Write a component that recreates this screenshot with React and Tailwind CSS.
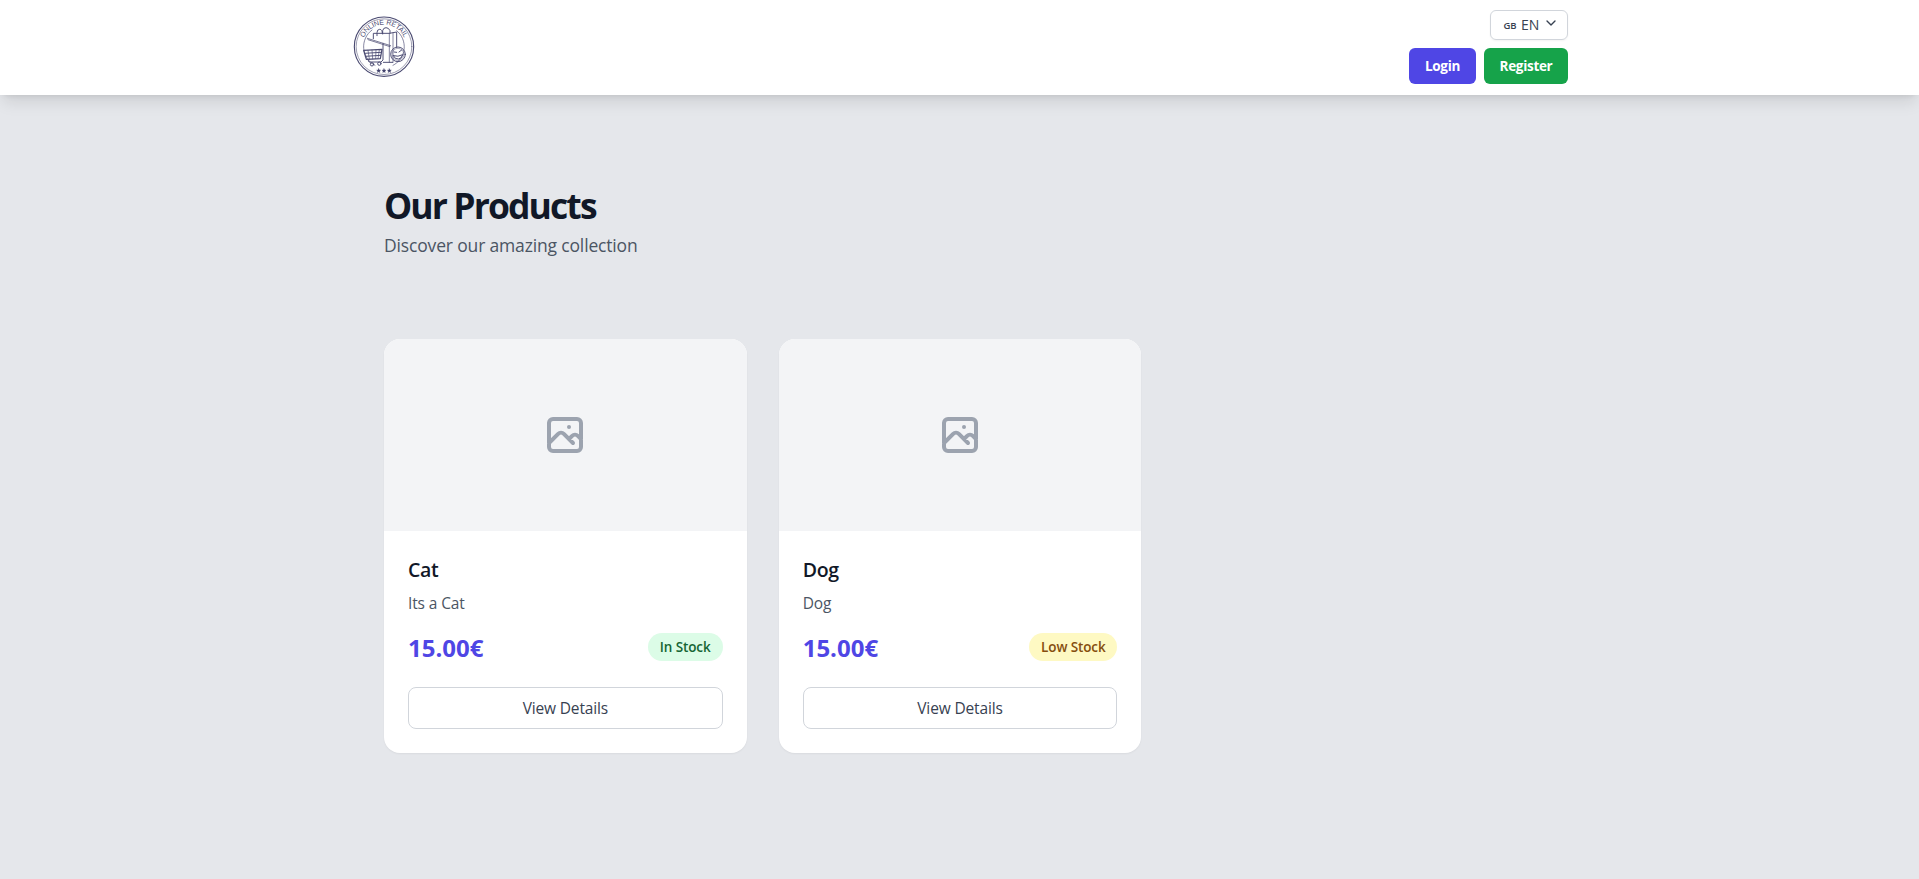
import { ChevronDown } from "lucide-react";

function Logo() {
  return (
    <svg className="size-16" viewBox="24 27 192 192" fill="none" stroke="#4b4b72" strokeWidth="2.9" strokeLinecap="round" strokeLinejoin="round">
      <defs>
        <path id="logo-arc" d="M54 122a66 66 0 0 1 132 0" />
      </defs>
      <circle cx="120" cy="122" r="89" strokeWidth="3.4" />
      <circle cx="120" cy="122" r="83.5" strokeWidth="1.6" />
      <path d="M93 178A62 62 0 0 1 84 72" strokeWidth="2" />
      <path d="M147 178A62 62 0 0 0 158 74" strokeWidth="2" />
      <text fill="#4b4b72" stroke="none" fontSize="21" textAnchor="middle" textLength="152" lengthAdjust="spacing" className="font-['Liberation_Sans']">
        <textPath href="#logo-arc" startOffset="50%">ONLINE RETAIL</textPath>
      </text>
      <path d="M88 98V82h48l22-4v46M118 169h28" />
      <path d="M136 82v87M147 81v88" strokeWidth="2" />
      <path d="M99 89V80q0-10 8-10t8 12M116 84V74q2-9 10-9t12 9v8" />
      <path d="M70 97l70 22M72 101l66 21" strokeWidth="2.2" />
      <path d="M117 112v50l-6 6" />
      <path d="M59 133l55-3-5 28-42 2z" strokeWidth="3.6" />
      <path d="M61 142l51-3M64 151l46-3" />
      <path d="M72 133l4 26M84 132l2 27M96 132l-1 26M106 131l-4 27" strokeWidth="2" />
      <path d="M72 161l3 7h36" />
      <circle cx="84" cy="175" r="5" />
      <circle cx="106" cy="173" r="5" />
      <circle cx="162" cy="145" r="22" />
      <circle cx="162" cy="145" r="18" strokeWidth="1.4" />
      <path d="M148 149q5 12 16 10 10-2 12-13-14 8-28 3M150 138l8 1M165 138l8-6" />
      <g fill="#3f3f6b" stroke="#3f3f6b" strokeWidth="1">
        <path d="M104 188l1.8 4 4.2.4-3.2 3 1 4.4-3.8-2.3-3.8 2.3 1-4.4-3.2-3 4.2-.4z" />
        <path d="M120 188l1.8 4 4.2.4-3.2 3 1 4.4-3.8-2.3-3.8 2.3 1-4.4-3.2-3 4.2-.4z" />
        <path d="M136 188l1.8 4 4.2.4-3.2 3 1 4.4-3.8-2.3-3.8 2.3 1-4.4-3.2-3 4.2-.4z" />
      </g>
    </svg>
  );
}

function PhotoIcon() {
  return (
    <svg className="size-12 text-[#9ca3af]" viewBox="0 0 24 24" fill="none" stroke="currentColor" strokeWidth="2" strokeLinecap="round" strokeLinejoin="round">
      <path d="M4 16l4.586-4.586a2 2 0 012.828 0L16 16m-2-2l1.586-1.586a2 2 0 012.828 0L20 14m-6-6h.01M6 20h12a2 2 0 002-2V6a2 2 0 00-2-2H6a2 2 0 00-2 2v12a2 2 0 002 2z" />
    </svg>
  );
}

const products = [
  { name: "Cat", description: "Its a Cat", price: "15.00€", stock: "In Stock", badge: "bg-[#dcfce7] text-[#166534] w-[75px]" },
  { name: "Dog", description: "Dog", price: "15.00€", stock: "Low Stock", badge: "bg-[#fef9c3] text-[#854d0e] w-[88px]" },
];

function ProductCard({ product }) {
  return (
    <article className="overflow-hidden rounded-2xl bg-white shadow-xs">
      <div className="flex h-48 items-center justify-center bg-[#f3f4f6]">
        <PhotoIcon />
      </div>
      <div className="p-6">
        <h3 className="mb-[7px] pt-px text-[19.5px] leading-7 font-semibold tracking-[-0.3px] text-[#111827]">{product.name}</h3>
        <p className="mb-4 text-[15.5px] leading-6 tracking-[-0.12px] text-[#4b5563]">{product.description}</p>
        <div className="mb-6 flex h-8 items-center justify-between">
          <span className="pt-px text-2xl leading-8 font-bold text-[#4f46e5]">{product.price}</span>
          <span className={`flex h-7 items-center justify-center rounded-full text-[13.5px] font-semibold tracking-[-0.12px] whitespace-nowrap ${product.badge}`}>
            {product.stock}
          </span>
        </div>
        <button className="block h-[42px] w-full rounded-lg border border-[#d1d5db] pt-0.5 text-[15.5px] tracking-[-0.15px] text-[#374151]">View Details</button>
      </div>
    </article>
  );
}

export default function App() {
  return (
    <div className="min-h-screen bg-[#e5e7eb] font-['Open_Sans',sans-serif]">
      <header className="bg-white pb-px pl-px shadow-lg">
        <div className="mx-auto flex h-[94px] max-w-7xl items-center justify-between px-8">
          <Logo />
          <div className="flex flex-col items-end gap-2">
            <button className="flex h-[30px] w-[78px] items-center rounded-md border border-[#d1d5db] pl-3 font-medium text-[#374151] shadow-xs">
              <span className="mt-[3px] mr-1 w-[14px] text-[9.5px] font-semibold">GB</span>
              <span className="-mt-px w-[18px] text-[14px]">EN</span>
              <ChevronDown className="-mt-1 ml-1 size-4" strokeWidth={2} />
            </button>
            <div className="flex gap-2 text-[13.5px] font-bold tracking-[-0.3px] text-white">
              <button className="h-9 w-[67px] rounded-md bg-[#4f46e5] pt-px">Login</button>
              <button className="h-9 w-[84px] rounded-md bg-[#16a34a] pt-px">Register</button>
            </div>
          </div>
        </div>
      </header>
      <div className="pl-px">
        <main className="mx-auto max-w-7xl px-16 pt-[90px]">
          <h1 className="text-[35.5px] leading-10 font-bold tracking-[-1.9px] text-[#111827]">Our Products</h1>
          <p className="mt-[6px] text-[17.5px] leading-7 tracking-[-0.16px] text-[#4b5563]">Discover our amazing collection</p>
          <section className="mt-20 grid grid-cols-3 gap-8">
            {products.map((product) => (
              <ProductCard key={product.name} product={product} />
            ))}
          </section>
        </main>
      </div>
    </div>
  );
}
